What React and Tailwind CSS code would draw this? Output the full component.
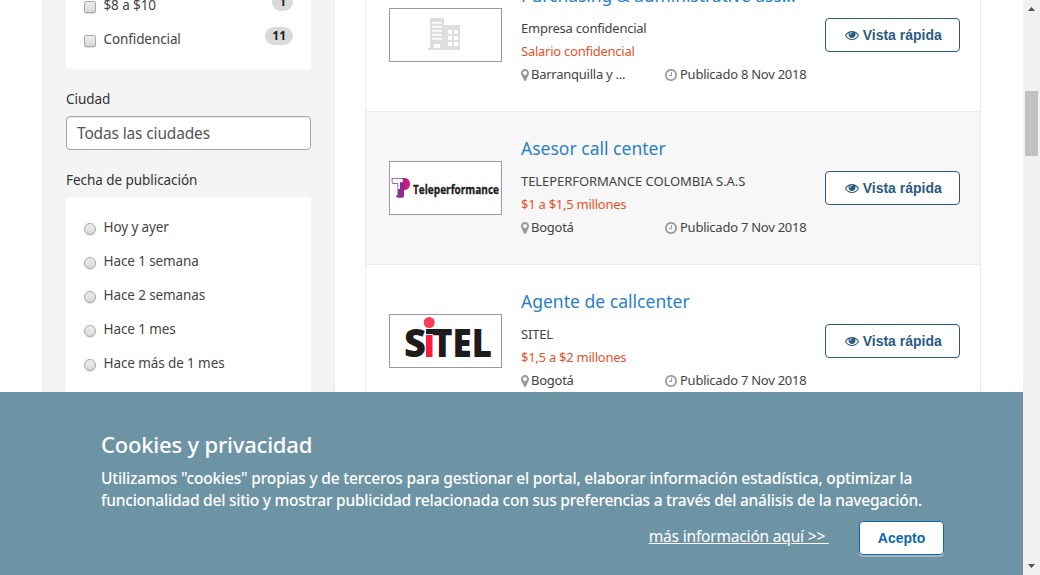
const EYE =
  "M1664 960q-152-236-381-353 61 104 61 225 0 185-131.5 316.5t-316.5 131.5-316.5-131.5-131.5-316.5q0-121 61-225-229 117-381 353 133 205 333.5 326.5t434.5 121.5 434.5-121.5 333.5-326.5zm-720-384q0-20-14-34t-34-14q-125 0-214.5 89.5t-89.5 214.5q0 20 14 34t34 14 34-14 14-34q0-86 61-147t147-61q20 0 34-14t14-34zm848 384q0 34-20 69-140 230-376.5 368.5t-499.5 138.5-499.5-139-376.5-368q-20-35-20-69t20-69q140-229 376.5-368t499.5-139 499.5 139 376.5 368q20 35 20 69z";
const MARKER =
  "M1152 640q0-106-75-181t-181-75-181 75-75 181 75 181 181 75 181-75 75-181zm256 0q0 109-33 179l-364 774q-16 33-47.5 52t-67.5 19-67.5-19-46.5-52l-365-774q-33-70-33-179 0-212 150-362t362-150 362 150 150 362z";
const CLOCK =
  "M1024 544v448q0 14-9 23t-23 9h-320q-14 0-23-9t-9-23v-64q0-14 9-23t23-9h224v-352q0-14 9-23t23-9h64q14 0 23 9t9 23zm416 352q0-148-73-273t-198-198-273-73-273 73-198 198-73 273 73 273 198 198 273 73 273-73 198-198 73-273zm224 0q0 209-103 385.5t-279.5 279.5-385.5 103-385.5-103-279.5-279.5-103-385.5 103-385.5 279.5-279.5 385.5-103 385.5 103 279.5 279.5 103 385.5z";

function BuildingLogo() {
  return (
    <svg width="111" height="52" viewBox="0 0 111 52">
      <path fill="#dedede" d="M40 9h14v7h16v25H38v-2h2z" />
      <g fill="#fff">
        <path d="M42 13h10v1.500H42zM42 17h10v1.500H42zM42 21h10v1.500H42zM42 25h10v1.500H42zM42 29h10v1.500H42zM44 35h6v4h-6z" />
        <path d="M58 21h4v4h-4zM64 21h4v4h-4zM58 27h4v4h-4zM64 27h4v4h-4zM58 33h4v4h-4zM64 33h4v4h-4z" />
      </g>
    </svg>
  );
}

function TeleperformanceLogo() {
  return (
    <svg width="111" height="52" viewBox="0 0 111 52">
      <defs>
        <linearGradient id="tp" x1="0" x2="1" y1="0" y2="0">
          <stop offset="0" stopColor="#7b4a9f" />
          <stop offset="0.55" stopColor="#8d2a90" />
          <stop offset="1" stopColor="#f0147c" />
        </linearGradient>
      </defs>
      <path fill="url(#tp)" d="M1.700 16h12.300c4 0 6 2.500 6 6s-2 6-6 6v6q0 1.800-2 1.800H8q-2 0-2-2l1.500-.8V22H3.500q-1.800 0-1.800-2z" />
      <path fill="#fff" d="M2.500 16.800h10.300v3.400H10V27H8.200v-5.800H3.800q-1.300 0-1.300-1.200z" />
      <text x="23" y="32" fill="#1d1d1b" stroke="#1d1d1b" strokeWidth="0.300" fontSize="12" fontWeight="700" fontFamily="Open Sans, Noto Sans, sans-serif" textLength="86" lengthAdjust="spacingAndGlyphs">
        Teleperformance
      </text>
    </svg>
  );
}

function SitelLogo() {
  return (
    <svg width="111" height="52" viewBox="0 0 111 52" fontFamily="Open Sans, Noto Sans, sans-serif" fontWeight="800" fontSize="39" fill="#1f1a1b">
      <text x="14" y="42" textLength="22" lengthAdjust="spacingAndGlyphs">S</text>
      <text x="42" y="42" textLength="60" lengthAdjust="spacingAndGlyphs">TEL</text>
      <path fill="#1f1a1b" d="M36 14h8v5h-8z" />
      <path fill="#fa1b3d" d="M36 20h6.500v22H36z" />
      <circle cx="39.200" cy="7.500" r="5.500" fill="#fb3b57" />
    </svg>
  );
}

const jobs = [
  { title: "Purchasing & administrative ass...", titleCls: "tracking-[-0.06px]", company: "Empresa confidencial", companyCls: "tracking-[-0.24px]", salary: "Salario confidencial", place: "Barranquilla y ...", date: "8 Nov 2018", Logo: BuildingLogo, bg: "bg-white" },
  { title: "Asesor call center", titleCls: "tracking-[0.01px]", company: "TELEPERFORMANCE COLOMBIA S.A.S", companyCls: "tracking-[-0.06px]", salary: "$1 a $1,5 millones", place: "Bogotá", date: "7 Nov 2018", Logo: TeleperformanceLogo, bg: "bg-[#f7f7f7]" },
  { title: "Agente de callcenter", titleCls: "tracking-[0.02px]", company: "SITEL", companyCls: "tracking-[-0.2px]", salary: "$1,5 a $2 millones", place: "Bogotá", date: "7 Nov 2018", Logo: SitelLogo, bg: "bg-white" },
];

function Job({ job }) {
  const { Logo } = job;
  return (
    <article className={`flex h-[153px] shrink-0 border-t border-[#ececec] pl-[23px] pr-5 ${job.bg}`}>
      <div className="mt-[49px] h-[54px] w-[113px] shrink-0 border border-[#999] bg-white">
        <Logo />
      </div>
      <div className="ml-[19px] w-[304px] shrink-0 whitespace-nowrap text-[13px] leading-[23px] text-[#444]">
        <h2 className={`mt-6 mb-2.5 text-[17.5px] leading-6 text-[#2a80c5] ${job.titleCls}`}>{job.title}</h2>
        <p className={job.companyCls}>{job.company}</p>
        <p className="tracking-[-0.25px] text-[#e5532a]">{job.salary}</p>
        <div className="flex tracking-[-0.25px]">
          <span className="flex w-36 items-center gap-0.5">
            <svg className="h-3.5 w-2 shrink-0" viewBox="384 0 1024 1792" fill="#999"><path d={MARKER} /></svg>
            {job.place}
          </span>
          <span className="flex items-center gap-[3px]">
            <svg className="h-3.5 w-3 shrink-0" viewBox="128 0 1536 1792" fill="#999"><path d={CLOCK} /></svg>
            Publicado {job.date}
          </span>
        </div>
      </div>
      <button className="mt-[59px] flex h-[34px] w-[135px] shrink-0 items-center justify-center gap-[3.5px] rounded-[4px] border border-[#2b5b82] bg-white pl-0.5 font-['Liberation_Sans',sans-serif] text-[14px] font-bold text-[#2b5b82]">
        <svg className="size-3.5" viewBox="0 0 1792 1792" fill="currentColor"><path d={EYE} /></svg>
        Vista rápida
      </button>
    </article>
  );
}

function Option({ label, count, round }) {
  return (
    <label className="flex h-[34px] items-center px-[18px] text-[13.5px] text-[#444]">
      <span className={`mt-px mr-[7.5px] size-3 shrink-0 border border-[#a8a8a8] bg-linear-to-b from-[#eee] to-[#d8d8d8] shadow-[0_1px_1px_#0002] ${round ? "rounded-full" : "rounded-[2px]"}`} />
      <span className="mb-px flex-1 tracking-[-0.1px]">{label}</span>
      {count && (
        <span className="mb-2 flex h-[18px] items-center rounded-full bg-[#dadada] px-[7px] text-[12px] font-bold text-[#222]">{count}</span>
      )}
    </label>
  );
}

function Sidebar() {
  return (
    <aside className="ml-[42px] w-[293px] shrink-0 border-x border-[#eee] bg-[#f4f4f4] px-[23px] text-[13.5px] text-[#333]">
      <div className="-mt-[11px] h-20 rounded-[4px] bg-white">
        <Option label="$8 a $10" count="1" />
        <Option label="Confidencial" count="11" />
      </div>
      <h3 className="mt-5 leading-5 tracking-[-0.05px]">Ciudad</h3>
      <div className="mt-[7px] flex h-[34px] items-center rounded-[4px] border border-[#a5a5a5] bg-white pt-px pl-2.5 text-[15.5px] tracking-[-0.15px] text-[#555] shadow-[inset_0_1px_1px_#00000013]">Todas las ciudades</div>
      <h3 className="mt-5 leading-5 tracking-[-0.05px]">Fecha de publicación</h3>
      <div className="mt-[7px] h-[210px] rounded-[4px] bg-white pt-3.5">
        <Option round label="Hoy y ayer" />
        <Option round label="Hace 1 semana" />
        <Option round label="Hace 2 semanas" />
        <Option round label="Hace 1 mes" />
        <Option round label="Hace más de 1 mes" />
      </div>
    </aside>
  );
}

function CookieBanner() {
  return (
    <section className="h-[183px] bg-[#6d94a5] pl-[101px] text-white">
      <h2 className="pt-[37px] text-[22px] leading-[30px] font-medium tracking-[-0.2px]">Cookies y privacidad</h2>
      <p className="mt-2 whitespace-nowrap text-[15.5px] leading-[22px] font-medium">
        <span className="tracking-[-0.18px]">Utilizamos "cookies" propias y de terceros para gestionar el portal, elaborar información estadística, optimizar la</span>
        <br />
        <span className="tracking-[-0.23px]">funcionalidad del sitio y mostrar publicidad relacionada con sus preferencias a través del análisis de la navegación.</span>
      </p>
      <div className="mt-2.5 flex items-center justify-end pr-[79px] text-[15.5px]">
        <a className="mr-[30px] mb-[3px] whitespace-pre tracking-[-0.18px] underline">{"más información aquí >> "}</a>
        <button className="h-[34px] w-[85px] rounded-[4px] border border-[#0a6ab0] bg-white font-['Liberation_Sans',sans-serif] text-[14px] font-bold text-[#0a6ab0] shadow-[0_2px_0_#a9b4ba]">Acepto</button>
      </div>
    </section>
  );
}

function Scrollbar() {
  return (
    <div className="flex w-[17px] flex-col items-center bg-[#f1f1f1]">
      <svg width="17" height="17" viewBox="0 0 17 17" fill="#505050"><path d="M5 11l3.500-4 3.500 4z" /></svg>
      <div className="mt-[74px] h-[65px] w-[13px] bg-[#c1c1c1]" />
      <svg className="mt-auto" width="17" height="17" viewBox="0 0 17 17" fill="#505050"><path d="M5 6l3.500 4L12 6z" /></svg>
    </div>
  );
}

export default function App() {
  return (
    <div className="flex h-[575px] w-[1040px] overflow-hidden bg-white font-['Noto_Sans',sans-serif]">
      <div className="w-[1023px]">
        <main className="flex h-[392px] overflow-hidden">
          <Sidebar />
          <div className="-mt-[42px] ml-[30px] flex w-[616px] flex-col border-x border-[#ececec]">
            {jobs.map((job) => (
              <Job key={job.title} job={job} />
            ))}
          </div>
        </main>
        <CookieBanner />
      </div>
      <Scrollbar />
    </div>
  );
}
